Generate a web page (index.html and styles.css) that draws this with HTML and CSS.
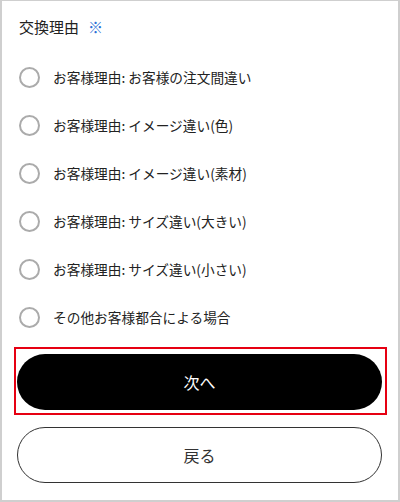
FILE: index.html
```html
<!DOCTYPE html>
<html lang="ja">
<head>
    <meta charset="UTF-8">
    <meta name="viewport" content="width=device-width, initial-scale=1.0">
    <title>交換理由</title>
    <link rel="stylesheet" href="styles.css">
</head>
<body>
    <div class="frame">
        <h2 class="title">交換理由 <span class="req">※</span></h2>
        <ul class="reasons">
            <li><span class="radio"></span>お客様理由: お客様の注文間違い</li>
            <li><span class="radio"></span>お客様理由: イメージ違い(色)</li>
            <li><span class="radio"></span>お客様理由: イメージ違い(素材)</li>
            <li><span class="radio"></span>お客様理由: サイズ違い(大きい)</li>
            <li><span class="radio"></span>お客様理由: サイズ違い(小さい)</li>
            <li><span class="radio"></span>その他お客様都合による場合</li>
        </ul>
        <div class="highlight">
            <button class="next-btn">次へ</button>
        </div>
        <button class="back-btn">戻る</button>
    </div>
</body>
</html>
```

FILE: styles.css
```css
* {
    box-sizing: border-box;
}
body {
    margin: 0;
    font-family: "Noto Sans CJK JP", "Noto Sans", sans-serif;
    color: #222;
    background: #fff;
}
.frame {
    width: 400px;
    height: 502px;
    border: 2px solid #cfcfcf;
    border-top-width: 1px;
    padding: 0 16px 0 15px;
}
.title {
    margin: 0;
    height: 52px;
    display: flex;
    align-items: center;
    font-size: 15px;
    font-weight: normal;
    padding-left: 2px;
    padding-bottom: 2px;
}
.req {
    color: #2b6fd6;
    margin-left: 9px;
    font-size: 15px;
}
.reasons {
    list-style: none;
    margin: 0;
    padding: 0;
}
.reasons li {
    height: 48px;
    display: flex;
    align-items: center;
    font-size: 13.7px;
    padding-left: 2px;
}
.radio {
    width: 21px;
    height: 21px;
    border: 2px solid #ababab;
    border-radius: 50%;
    margin-right: 13px;
    flex-shrink: 0;
}
.highlight {
    margin: 6px 0 0 -3px;
    width: 373px;
    border: 2px solid #e60012;
    padding: 5px 3px 3px 1px;
}
button {
    display: block;
    width: 365px;
    height: 56px;
    border-radius: 28px;
    font-family: inherit;
    font-size: 16px;
    cursor: pointer;
}
.next-btn {
    background-color: #000;
    color: #fff;
    border: none;
}
.back-btn {
    margin-top: 12px;
    background-color: #fff;
    color: #333;
    border: 1.5px solid #333;
}
```
